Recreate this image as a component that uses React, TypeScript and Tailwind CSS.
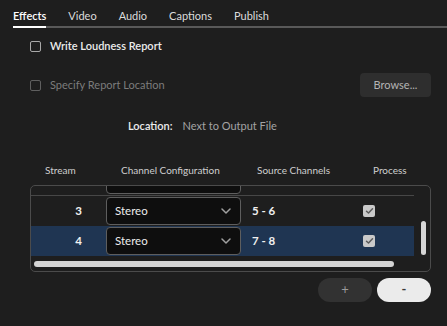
import React from "react";

const font = { fontFamily: "Lato, 'Noto Sans', sans-serif" };

function Chevron() {
  return (
    <svg width="10" height="6" viewBox="0 0 10 6" fill="none">
      <path d="M1 1L5 5L9 1" stroke="#a0a0a0" strokeWidth="1.5" strokeLinecap="round" strokeLinejoin="round" />
    </svg>
  );
}

function ProcessCheck() {
  return (
    <div className="w-[12px] h-[12px] rounded-[2px] bg-[#c9c9c9] flex items-center justify-center">
      <svg width="9" height="8" viewBox="0 0 9 8" fill="none">
        <path d="M1.5 4.2L3.5 6L7.5 1.8" stroke="#5a5a5a" strokeWidth="1.5" strokeLinecap="round" strokeLinejoin="round" />
      </svg>
    </div>
  );
}

function Row({ n, src, selected, border }: { n?: string; src?: string; selected?: boolean; border?: boolean }) {
  return (
    <div
      className={`flex items-center w-[383px] shrink-0 ${selected ? "bg-[#1f3552]" : ""} ${border ? "border-b border-[#474747] h-[31px]" : "h-[30px]"}`}
    >
      <div className="w-[75px] pr-[24px] text-right text-[11.5px] font-bold text-[#f0f0f0]">{n}</div>
      <div className="w-[135px] h-[28px] rounded-[4px] border border-[#5e5e5e] bg-[#0e0e0e] flex items-center justify-between pl-[8px] pr-[9px]">
        {n ? <span className="text-[11.5px] text-[#ececec]">Stereo</span> : <span />}
        {n ? <Chevron /> : null}
      </div>
      <div className="w-[122px] pl-[11px] text-[11.5px] font-bold text-[#f0f0f0]">{src}</div>
      {n ? <ProcessCheck /> : null}
    </div>
  );
}

export default function App() {
  return (
    <div className="w-[447px] h-[326px] bg-[#1e1e1e] overflow-hidden flex flex-col" style={font}>
      {/* Tabs */}
      <div className="pt-[8px]">
        <div className="ml-[13px] flex gap-[22px] border-b-2 border-[#595959] text-[11px] leading-[16px]">
          <div className="pb-[2px] border-b-2 border-white -mb-[2px] text-white font-semibold">Effects</div>
          <div className="pb-[2px] text-[#dcdcdc]">Video</div>
          <div className="pb-[2px] text-[#dcdcdc]">Audio</div>
          <div className="pb-[2px] text-[#dcdcdc]">Captions</div>
          <div className="pb-[2px] text-[#dcdcdc]">Publish</div>
        </div>
      </div>

      {/* Write Loudness Report */}
      <div className="mt-[10px] h-[16px] flex items-center pl-[30px] gap-[9px]">
        <div className="w-[11px] h-[11px] rounded-[2px] border-[1.5px] border-[#a8a8a8]" />
        <span className="text-[11px] text-[#ececec] font-semibold">Write Loudness Report</span>
      </div>

      {/* Specify Report Location */}
      <div className="mt-[19px] h-[24px] flex items-center justify-between pl-[30px] pr-[16px]">
        <div className="flex items-center gap-[9px]">
          <div className="w-[11px] h-[11px] rounded-[2px] border-[1.5px] border-[#5f5f5f]" />
          <span className="text-[11px] text-[#7c7c7c]">Specify Report Location</span>
        </div>
        <div className="w-[71px] h-[24px] rounded-[4px] bg-[#2e2e2e] flex items-center justify-center text-[11px] text-[#b4b4b4]">
          Browse...
        </div>
      </div>

      {/* Location */}
      <div className="mt-[21px] h-[16px] flex items-center pl-[128px] gap-[10px] text-[11px]">
        <span className="text-[#ececec] font-semibold">Location:</span>
        <span className="text-[#a4a4a4]">Next to Output File</span>
      </div>

      {/* Headers */}
      <div className="mt-[28px] h-[16px] flex items-center pl-[45px] text-[10px] text-[#cfcfcf] whitespace-nowrap">
        <div className="w-[76px]">Stream</div>
        <div className="w-[136px]">Channel Configuration</div>
        <div className="w-[116px]">Source Channels</div>
        <div>Process</div>
      </div>

      {/* Table */}
      <div className="mt-[7px] ml-[30px] w-[401px] h-[87px] rounded-[5px] border border-[#4b4b4b] relative overflow-hidden flex flex-col">
        <div className="h-[71px] overflow-hidden flex flex-col">
          <div className="-mt-[21px]">
            <Row border />
          </div>
          <Row n="3" src="5 - 6" />
          <Row n="4" src="7 - 8" selected />
        </div>
        <div className="mt-[4px] ml-[3px] w-[360px] h-[6px] rounded-full bg-[#d4d4d4]" />
        <div className="absolute left-[390px] top-[35px] w-[5px] h-[34px] rounded-full bg-[#d6d6d6]" />
      </div>

      {/* Buttons */}
      <div className="mt-[6px] flex justify-end gap-[5px] pr-[16px]">
        <div className="w-[54px] h-[24px] rounded-full bg-[#323232] flex items-center justify-center text-[13px] text-[#9a9a9a]">
          +
        </div>
        <div className="w-[54px] h-[24px] rounded-full bg-[#ebebeb] flex items-center justify-center text-[13px] font-bold text-[#3a3a3a]">
          -
        </div>
      </div>
    </div>
  );
}
